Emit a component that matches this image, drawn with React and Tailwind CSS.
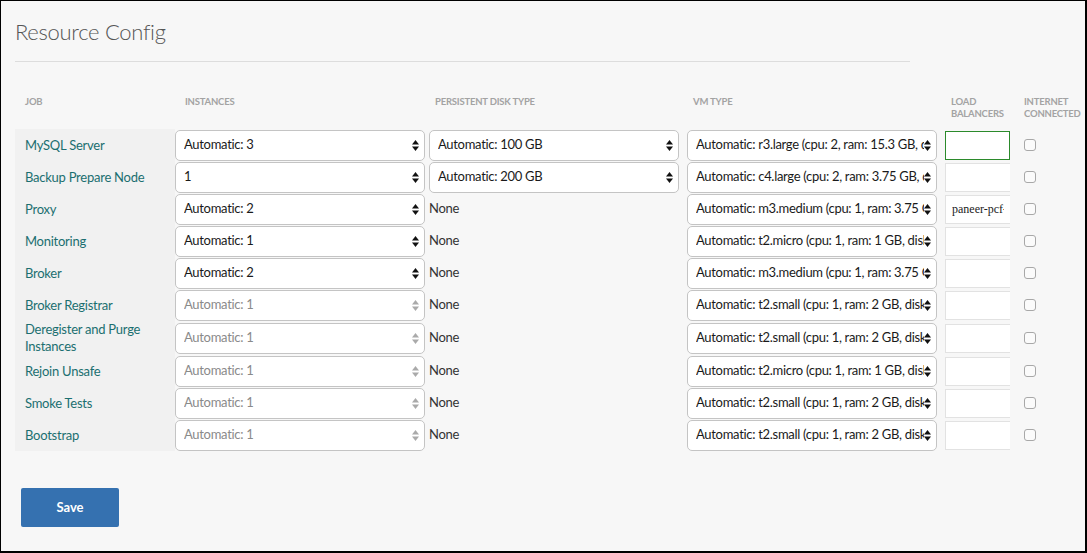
import React from "react";

const rows = [
  { job: "MySQL Server", inst: "Automatic: 3", disk: "Automatic: 100 GB", vm: "Automatic: r3.large (cpu: 2, ram: 15.3 GB, disk: 32 GB)", lb: "", focus: true },
  { job: "Backup Prepare Node", inst: "1", disk: "Automatic: 200 GB", vm: "Automatic: c4.large (cpu: 2, ram: 3.75 GB, disk: 8 GB)", lb: "" },
  { job: "Proxy", inst: "Automatic: 2", disk: null, vm: "Automatic: m3.medium (cpu: 1, ram: 3.75 GB, disk: 8 GB)", lb: "paneer-pcf-router" },
  { job: "Monitoring", inst: "Automatic: 1", disk: null, vm: "Automatic: t2.micro (cpu: 1, ram: 1 GB, disk: 8 GB)", lb: "" },
  { job: "Broker", inst: "Automatic: 2", disk: null, vm: "Automatic: m3.medium (cpu: 1, ram: 3.75 GB, disk: 8 GB)", lb: "" },
  { job: "Broker Registrar", inst: "Automatic: 1", off: true, disk: null, vm: "Automatic: t2.small (cpu: 1, ram: 2 GB, disk: 8 GB)", lb: "" },
  { job: "Deregister and Purge Instances", inst: "Automatic: 1", off: true, disk: null, vm: "Automatic: t2.small (cpu: 1, ram: 2 GB, disk: 8 GB)", lb: "" },
  { job: "Rejoin Unsafe", inst: "Automatic: 1", off: true, disk: null, vm: "Automatic: t2.micro (cpu: 1, ram: 1 GB, disk: 8 GB)", lb: "" },
  { job: "Smoke Tests", inst: "Automatic: 1", off: true, disk: null, vm: "Automatic: t2.small (cpu: 1, ram: 2 GB, disk: 8 GB)", lb: "" },
  { job: "Bootstrap", inst: "Automatic: 1", off: true, disk: null, vm: "Automatic: t2.small (cpu: 1, ram: 2 GB, disk: 8 GB)", lb: "" },
];

const Arrows = ({ off }) => (
  <svg width="7" height="11" viewBox="0 0 7 11" className="shrink-0">
    <polygon points="0,4.6 3.5,0 7,4.6" fill={off ? "#aaaaaa" : "#111111"} />
    <polygon points="0,6.4 7,6.4 3.5,11" fill={off ? "#aaaaaa" : "#111111"} />
  </svg>
);

const Select = ({ value, off }) => (
  <div className="w-[250px] h-[31px] shrink-0 flex items-center bg-white border border-[#c4c4c4] rounded-[5px] pl-[8px] pr-[5px]">
    <span className={`flex-1 overflow-hidden whitespace-nowrap pr-[2px] tracking-[-0.3px] ${off ? "text-[#8a8a8a]" : "text-[#1a1a1a]"}`}>{value}</span>
    <Arrows off={off} />
  </div>
);

export default function App() {
  return (
    <div className="w-[1087px] h-[553px] box-border bg-[#f7f7f7] border-l border-t border-r-2 border-b-2 border-black pl-[14px] text-[13px]" style={{ fontFamily: "Lato, 'Noto Sans', sans-serif" }}>
      {/* Title */}
      <h1 className="pt-[16px] text-[22px] leading-[30px] font-light tracking-[-0.3px] text-[#555]">Resource Config</h1>
      <div className="w-[895px] mt-[14px] border-b border-[#dddddd]" />

      {/* Header */}
      <div className="flex mt-[34px] h-[33px] text-[9.5px] leading-[12px] font-bold uppercase tracking-[-0.2px] text-[#a3a3a3]">
        <div className="w-[160px] pl-[10px]">Job</div>
        <div className="w-[254px] pl-[10px]">Instances</div>
        <div className="w-[258px] pl-[6px]">Persistent Disk Type</div>
        <div className="w-[258px] pl-[6px]">VM Type</div>
        <div className="w-[79px] pl-[6px]">Load<br />Balancers</div>
        <div>Internet<br />Connected</div>
      </div>

      {/* Rows */}
      <div className="flex flex-col">
        {rows.map((r, i) => (
          <div key={i} className="flex items-stretch min-h-[32px]">
            <div className="w-[160px] shrink-0 bg-[#f1f1f1] pl-[10px] pr-[6px] flex items-center text-[#1b6f70] leading-[17px] tracking-[-0.25px]">{r.job}</div>
            <div className="flex items-center"><Select value={r.inst} off={r.off} /></div>
            <div className="w-[4px]" />
            <div className="w-[250px] shrink-0 flex items-center">
              {r.disk ? <Select value={r.disk} /> : <span className="text-[#333] tracking-[-0.25px]">None</span>}
            </div>
            <div className="w-[8px]" />
            <div className="flex items-center"><Select value={r.vm} /></div>
            <div className="w-[8px]" />
            <div className="w-[65px] shrink-0 overflow-hidden flex items-center">
              {r.focus ? (
                <div className="w-[65px] shrink-0 h-[29px] bg-white border border-[#2b8a2b]" />
              ) : (
                <div className="w-[90px] shrink-0 h-[29px] bg-white border border-[#e2e2e2] flex items-center pl-[6px]">
                  <span className="w-[52px] overflow-hidden whitespace-nowrap text-[12px] text-[#222]" style={{ fontFamily: "'Liberation Serif', serif" }}>{r.lb}</span>
                </div>
              )}
            </div>
            <div className="w-[14px]" />
            <div className="flex items-center">
              <div className="w-[12px] h-[12px] rounded-[3px] border border-[#a8a8a8] bg-[#fbfbfb]" />
            </div>
          </div>
        ))}
      </div>

      <button className="mt-[37px] ml-[6px] w-[98px] h-[39px] rounded-[2px] bg-[#3571b0] text-white font-bold text-[13px]">Save</button>
    </div>
  );
}
